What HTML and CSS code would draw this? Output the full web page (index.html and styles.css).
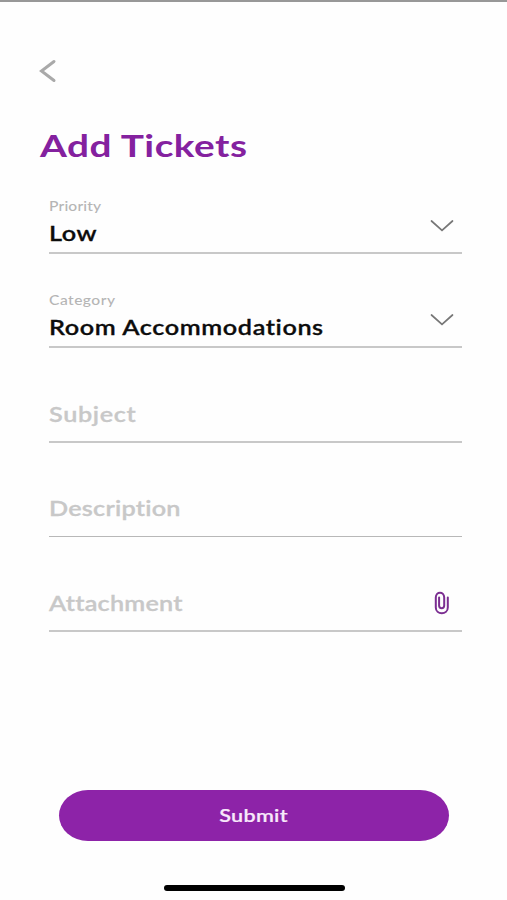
FILE: index.html
```
<!DOCTYPE html>
<html lang="en">
<head>
<meta charset="utf-8">
<title>Add Tickets</title>
<link rel="stylesheet" href="styles.css">
</head>
<body>
<main class="screen">
  <header class="header">
    <svg class="back" width="20" height="26" viewBox="0 0 20 26" aria-label="Back"><path d="M15 3.5 2.5 13 15 22.5"/></svg>
    <h1 class="title"><span class="wide">Add Tickets</span></h1>
  </header>
  <form class="form">
    <div class="field">
      <div class="text">
        <div class="label"><span class="wide">Priority</span></div>
        <div class="value"><span class="wide">Low</span></div>
      </div>
      <svg class="chevron" width="24" height="14" viewBox="0 0 24 14"><path d="M1.5 2 12 11.3 22.5 2"/></svg>
    </div>
    <div class="field">
      <div class="text">
        <div class="label category"><span class="wide">Category</span></div>
        <div class="value"><span class="wide">Room Accommodations</span></div>
      </div>
      <svg class="chevron" width="24" height="14" viewBox="0 0 24 14"><path d="M1.5 2 12 11.3 22.5 2"/></svg>
    </div>
    <div class="field"><div class="placeholder subject"><span class="wide">Subject</span></div></div>
    <div class="field thin"><div class="placeholder"><span class="wide">Description</span></div></div>
    <div class="field">
      <div class="placeholder"><span class="wide">Attachment</span></div>
      <svg class="clip" width="16" height="24" viewBox="0 0 16 24"><path d="M5.1 6.5V14.5C5.1 18 10.2 18 10.2 14.5V6.5C10.2.1 1.8.1 1.8 6.5V16.5C1.8 24.2 13.8 24.2 13.8 16.5V6.5"/></svg>
    </div>
  </form>
  <button class="submit" type="button"><span class="wide">Submit</span></button>
  <div class="home"></div>
</main>
</body>
</html>
```
FILE: styles.css
```
* { box-sizing: border-box; }
body { margin: 0; background: #fefefe; font-family: Lato, "Open Sans", sans-serif; }
.screen { height: 900px; border-top: 2px solid #989898; display: flex; flex-direction: column; overflow: hidden; }
.header { padding: 56px 40px 0; height: 157px; flex: none; }
.back { display: block; margin-left: -1px; fill: none; stroke: #a9a9a9; stroke-width: 3; stroke-linecap: round; }
.wide { display: inline-block; transform: scaleX(1.2); transform-origin: left center; white-space: nowrap; font-variant-ligatures: none; }
.title { margin: 41px 0 0; font-size: 31px; line-height: 40px; font-weight: 700; color: #84219f; }
.title .wide { transform: scaleX(1.25); letter-spacing: 0.4px; }
.form { margin: 0 45px 0 49px; }
.field { height: 94.6px; border-bottom: 2px solid #c8c8c8; display: flex; align-items: flex-end; justify-content: space-between; }
.thin { border-bottom-width: 1px; border-color: #b8b8b8; }
.thin .placeholder { padding-bottom: 15px; }
.label { font-size: 13px; line-height: 16px; font-weight: 500; letter-spacing: 0.15px; color: #b5b5b5; }
.category { letter-spacing: 0.4px; }
.value { font-size: 21px; line-height: 26px; padding: 6px 0 6px; height: 38px; font-weight: 600; letter-spacing: 0.5px; color: #0c0c0c; -webkit-text-stroke: 0.3px #0c0c0c; }
.placeholder { font-size: 21px; line-height: 26px; padding-bottom: 14px; font-weight: 600; letter-spacing: 0.2px; color: #c8c8c8; -webkit-text-stroke: 0.3px #c8c8c8; }
.subject { letter-spacing: 0.55px; }
.chevron { margin: 0 8px 19px 0; fill: none; stroke: #777; stroke-width: 1.7; stroke-linecap: round; }
.clip { margin: 0 12px 15px 0; fill: none; stroke: #7b2e91; stroke-width: 2; stroke-linecap: round; }
.submit { margin: 158px 58px 0 59px; height: 51px; flex: none; border: 0; border-radius: 29px / 25.5px; background: #8d23a8; color: #f8e8fb; font: 600 18px/24px Lato, sans-serif; padding: 0; }
.submit .wide { transform-origin: center; letter-spacing: 0.2px; -webkit-text-stroke: 0.2px #f8e8fb; }
.home { width: 181px; height: 6px; margin: 44px 0 0 164px; border-radius: 3px; background: #000; flex: none; }
```
